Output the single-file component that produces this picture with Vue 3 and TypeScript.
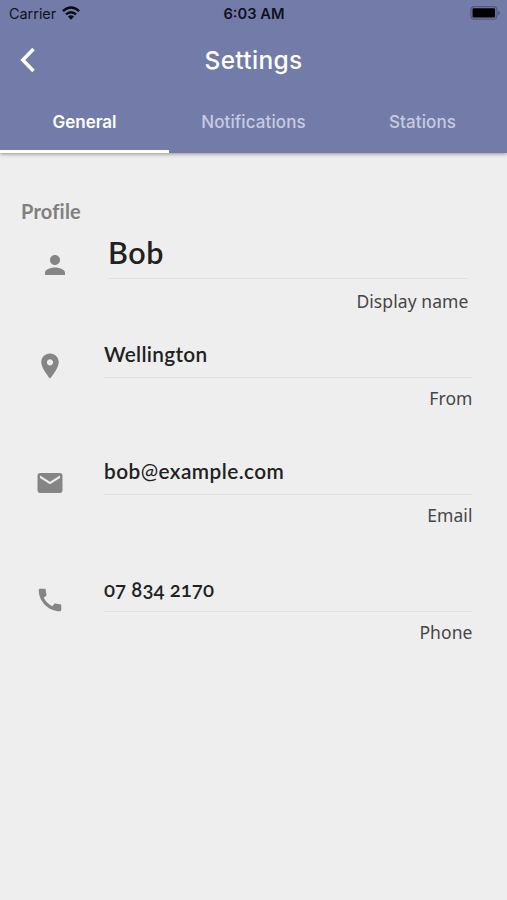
<script setup lang="ts">
import { ref } from 'vue'

interface Field {
  id: string
  value: string
  label: string
  icon: string
}

const tabs: string[] = ['General', 'Notifications', 'Stations']
const activeTab = ref(0)

const fields: Field[] = [
  {
    id: 'name',
    value: 'Bob',
    label: 'Display name',
    icon: 'M12 12c2.21 0 4-1.79 4-4s-1.79-4-4-4-4 1.79-4 4 1.79 4 4 4zm0 2c-2.67 0-8 1.34-8 4v2h16v-2c0-2.66-5.33-4-8-4z',
  },
  {
    id: 'from',
    value: 'Wellington',
    label: 'From',
    icon: 'M12 2C8.13 2 5 5.13 5 9c0 5.25 7 13 7 13s7-7.75 7-13c0-3.87-3.13-7-7-7zm0 9.5c-1.38 0-2.5-1.12-2.5-2.5s1.12-2.5 2.5-2.5 2.5 1.12 2.5 2.5-1.12 2.5-2.5 2.5z',
  },
  {
    id: 'email',
    value: 'bob@example.com',
    label: 'Email',
    icon: 'M20 4H4c-1.1 0-1.99.9-1.99 2L2 18c0 1.1.9 2 2 2h16c1.1 0 2-.9 2-2V6c0-1.1-.9-2-2-2zm0 4l-8 5-8-5V6l8 5 8-5v2z',
  },
  {
    id: 'phone',
    value: '07 834 2170',
    label: 'Phone',
    icon: 'M20.01 15.38c-1.23 0-2.42-.2-3.53-.56-.35-.12-.74-.03-1.01.24l-1.57 1.97c-2.83-1.35-5.48-3.9-6.89-6.83l1.95-1.66c.27-.28.35-.67.24-1.02-.37-1.11-.56-2.3-.56-3.53 0-.54-.45-.99-.99-.99H4.19C3.65 3 3 3.24 3 3.99 3 13.28 10.73 21 20.01 21c.71 0 .99-.63.99-1.18v-3.45c0-.54-.45-.99-.99-.99z',
  },
]

// Splits a value so that the @ sign can be set in a lighter weight.
const parts = (value: string): string[] => value.split(/(@)/)
</script>

<template>
  <div class="screen">
    <header class="top">
      <div class="status">
        <div class="carrier">
          <span>Carrier</span>
          <svg class="wifi" viewBox="0 0 18 14" fill="none" stroke="#090b12" stroke-width="2.5">
            <path d="M.9 5.1Q9-2.1 17.1 5.1" />
            <path d="M4 8.4Q9 4 14 8.4" />
            <path d="M5.9 10.6Q9 8.1 12.1 10.6L9 13.8z" fill="#090b12" stroke="none" />
          </svg>
        </div>
        <span class="clock">6:03 AM</span>
        <svg class="battery" viewBox="0 0 30 14">
          <rect x=".9" y=".7" width="26" height="12.4" rx="3.4" fill="none" stroke="#535979" stroke-width="1.2" />
          <rect x="2.5" y="2.2" width="22.6" height="9.4" rx="1.4" fill="#000" />
          <path d="M28 4.8q2 .6 2 2.2t-2 2.2z" fill="#535979" />
        </svg>
      </div>
      <div class="appbar">
        <svg class="back" viewBox="0 0 16 26" fill="none" stroke="#fff" stroke-width="3.5">
          <path d="M13.5 2 2.8 13l10.7 11" />
        </svg>
        <h1>Settings</h1>
      </div>
      <nav class="tabs">
        <button
          v-for="(tab, i) in tabs"
          :key="tab"
          class="tab"
          :class="{ active: i === activeTab }"
          @click="activeTab = i"
        >
          <span>{{ tab }}</span>
        </button>
      </nav>
    </header>

    <main class="content">
      <h2>Profile</h2>
      <section v-for="field in fields" :key="field.id" class="field" :class="field.id">
        <svg class="icon" viewBox="0 0 24 24"><path :d="field.icon" /></svg>
        <div class="body">
          <div class="value"><span v-for="(part, i) in parts(field.value)" :key="i" :class="{ at: part === '@' }">{{ part }}</span></div>
          <div class="label">{{ field.label }}</div>
        </div>
      </section>
    </main>
  </div>
</template>

<style>
body {
  background: #eeeeee;
}
</style>

<style scoped>
.screen {
  width: 507px;
  height: 900px;
  background: #eeeeee;
  overflow: hidden;
  font-family: Inter, "Liberation Sans", sans-serif;
}
.top {
  height: 152.5px;
  background: #737ba8;
  box-shadow: 0 1px 4px rgba(0, 0, 0, 0.4);
  display: flex;
  flex-direction: column;
}
.status {
  height: 27px;
  padding: 0 7px 0 9px;
  display: grid;
  grid-template-columns: 1fr auto 1fr;
  align-items: center;
  color: #10121b;
  font-size: 14.4px;
}
.carrier {
  display: flex;
  align-items: center;
  gap: 6px;
}
.wifi {
  width: 18px;
  height: 14px;
  margin-top: -2px;
}
.clock {
  font-weight: 600;
  font-size: 14.7px;
  margin-left: -1px;
}
.battery {
  width: 30px;
  height: 14px;
  justify-self: end;
  margin-top: -1px;
}
.appbar {
  height: 65px;
  display: grid;
  grid-template-columns: 1fr auto 1fr;
  align-items: center;
}
.back {
  width: 16px;
  height: 26px;
  margin-left: 20px;
}
h1 {
  margin: 1px 0 0;
  color: #fff;
  font-size: 24.5px;
  font-weight: 500;
  letter-spacing: 0.3px;
}
.tabs {
  flex: 1;
  display: grid;
  grid-template-columns: repeat(3, 1fr);
}
.tab {
  border: 0;
  border-bottom: 3px solid transparent;
  background: none;
  padding: 3px 0 0;
  font: 500 17px/54px Inter, "Liberation Sans", sans-serif;
  letter-spacing: 0.1px;
  color: #c7cbe2;
}
.tab.active {
  color: #fff;
  font-weight: 600;
  letter-spacing: 0;
  border-bottom-color: #fff;
}
.content {
  padding: 46.5px 35px 0 21px;
}
h2 {
  margin: 0;
  font: 700 20px/24px Lato, sans-serif;
  letter-spacing: 0.2px;
  color: #808080;
}
.field {
  display: grid;
  grid-template-columns: 83px 1fr;
  height: 117.2px;
}
.icon {
  width: 30px;
  height: 30px;
  margin: 14px 0 0 14px;
  fill: #858585;
}
.value {
  height: 39.5px;
  border-bottom: 1px solid #e2e2e2;
  font: 600 20.8px/34px Lato, sans-serif;
  letter-spacing: 0.3px;
  color: #212121;
  white-space: nowrap;
  font-variant-numeric: oldstyle-nums;
}
.at {
  font-weight: 400;
}
.label {
  margin-top: 8px;
  margin-right: -0.5px;
  text-align: right;
  font: 400 17.5px/24px "Noto Sans", sans-serif;
  letter-spacing: 0.08px;
  color: #464646;
}
.email .value {
  letter-spacing: 0.44px;
}
.phone .value {
  font-size: 20.4px;
  line-height: 36px;
  letter-spacing: 0.07px;
}
.name {
  height: 114px;
  padding-right: 4px;
  grid-template-columns: 87px 1fr;
}
.name .icon {
  margin: 27px 0 0 18.5px;
}
.name .value {
  height: 55px;
  font-size: 30.5px;
  font-weight: 600;
  line-height: 58px;
  letter-spacing: 0.6px;
}
.name .label {
  margin-top: 10px;
}
</style>
